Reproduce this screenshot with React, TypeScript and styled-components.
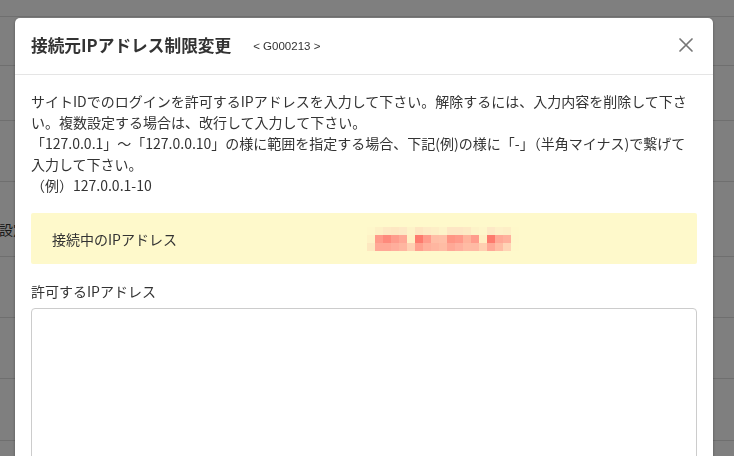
import React from 'react'
import styled, { createGlobalStyle } from 'styled-components'

const GlobalStyle = createGlobalStyle`
  html, body {
    margin: 0;
    padding: 0;
    width: 734px;
    height: 456px;
    overflow: hidden;
    background: #fff;
    font-family: "Noto Sans CJK JP", "Noto Sans", sans-serif;
    color: #333;
  }
`

const rows = [
  { height: 49, label: '' },
  { height: 55, label: '' },
  { height: 61, label: '' },
  { height: 75, label: '設定' },
  { height: 61, label: '' },
  { height: 61, label: '' },
  { height: 62, label: '' },
]

// mosaic of the hidden ip address, one array per row
const mosaic = [
  ['#fef7ca', '#fdf0c6', '#fde9c4', '#fde7c2', '#fde9c6', '#fdf3c8', '#fde6c2', '#fdebc6', '#fdeec6', '#fdf3c9', '#fde6c4', '#fde6c4', '#fde9c4', '#fdf3c8', '#fef6ca', '#fde9c6', '#fdf0c8', '#fdeec6', '#fef8ca'],
  ['#fef2c6', '#ff9b8a', '#fe8a7c', '#fe9c8c', '#ffa896', '#fff0c4', '#fd7b6e', '#ff9c8c', '#ffbea6', '#ffc0a8', '#ff9584', '#ff9a8a', '#ffb39c', '#ff9c8c', '#ffefc3', '#fd7a6d', '#ffa896', '#ffb09c', '#fef7ca'],
  ['#fde8c0', '#ffa896', '#ffa896', '#ffae9c', '#ffb6a0', '#ffd0b2', '#ffa08e', '#ffb09c', '#ffb6a0', '#ffbca4', '#ffa896', '#ffb09e', '#ffbba4', '#ffbaa4', '#ffcfb0', '#ffa896', '#ffbca4', '#ffd4b6', '#fef8ca'],
]

const App: React.FC = () =>
  <>
    <GlobalStyle />
    <Page>
      <TopBar />
      {rows.map((r, i) =>
        <Row key={i} $h={r.height}>
          <RowLabel>{r.label}</RowLabel>
        </Row>
      )}
    </Page>
    <Overlay>
      <Modal>
        <Header>
          <Title>接続元IPアドレス制限変更</Title>
          <Code>&lt; G000213 &gt;</Code>
          <Close aria-label="閉じる">
            <svg width="16" height="16" viewBox="0 0 16 16">
              <path d="M2 2 L14 14 M14 2 L2 14" stroke="#767676" strokeWidth="1.7" strokeLinecap="round" />
            </svg>
          </Close>
        </Header>
        <Body>
          <Description>
            サイトIDでのログインを許可するIPアドレスを入力して下さい。解除するには、入力内容を削除して下さい。複数設定する場合は、改行して入力して下さい。<br />
            「127.0.0.1」～「127.0.0.10」の様に範囲を指定する場合、下記(例)の様に「-」（半角マイナス)で繋げて入力して下さい。<br />
            （例）127.0.0.1-10
          </Description>
          <Notice>
            <NoticeLabel>接続中のIPアドレス</NoticeLabel>
            <svg width="152" height="24" viewBox="0 0 152 24" shapeRendering="crispEdges">
              {mosaic.map((line, y) =>
                line.map((c, x) =>
                  <rect key={`${x}-${y}`} x={x * 8} y={y * 8} width="8" height="8" fill={c} />
                )
              )}
            </svg>
          </Notice>
          <FieldLabel>許可するIPアドレス</FieldLabel>
          <TextArea />
        </Body>
      </Modal>
    </Overlay>
  </>

const Page = styled.div`
  display: flex;
  flex-direction: column;
  width: 734px;
`

const TopBar = styled.div`
  height: 16px;
  border-bottom: 1px solid #dedede;
`

const Row = styled.div<{ $h: number }>`
  height: ${({ $h }) => $h}px;
  box-sizing: border-box;
  border-bottom: 1px solid #dedede;
  display: flex;
  align-items: center;
  padding-top: 20px;
`

const RowLabel = styled.span`
  font-size: 14px;
  margin-left: -1px;
  color: #333;
`

const Overlay = styled.div`
  position: fixed;
  inset: 0;
  background: rgba(0, 0, 0, 0.5);
  display: flex;
  padding: 18px 21px 0 15px;
`

const Modal = styled.div`
  flex: 1;
  background: #fff;
  border-radius: 5px 5px 0 0;
  box-shadow: 0 1px 3px rgba(0, 0, 0, 0.35);
  display: flex;
  flex-direction: column;
  height: 520px;
`

const Header = styled.div`
  height: 57px;
  box-sizing: border-box;
  border-bottom: 1px solid #e5e5e5;
  display: flex;
  align-items: center;
  padding: 0 19px 2px 16px;
`

const Title = styled.h2`
  margin: 0;
  font-size: 16.7px;
  font-weight: 700;
  color: #333;
`

const Code = styled.span`
  margin-left: 22px;
  font-family: "Liberation Sans", Arial, sans-serif;
  font-size: 11.5px;
  color: #333;
  padding-top: 2px;
`

const Close = styled.button`
  margin-left: auto;
  background: none;
  border: none;
  padding: 0;
  width: 16px;
  height: 16px;
  display: flex;
  cursor: pointer;
`

const Body = styled.div`
  padding: 16px 16px 0;
  display: flex;
  flex-direction: column;
`

const Description = styled.p`
  margin: 0;
  font-size: 14px;
  line-height: 21px;
  color: #333;
`

const Notice = styled.div`
  margin-top: 17px;
  height: 51px;
  background: #fef9cb;
  border-radius: 2px;
  display: grid;
  grid-template-columns: 315px 1fr;
  align-items: center;
  padding: 0 21px;
`

const NoticeLabel = styled.span`
  font-size: 14px;
  color: #333;
`

const FieldLabel = styled.label`
  margin-top: 17px;
  font-size: 14px;
  line-height: 21px;
  color: #333;
`

const TextArea = styled.textarea`
  margin-top: 6px;
  height: 200px;
  border: 1px solid #cccccc;
  border-radius: 4px;
  resize: none;
  font: inherit;
`

export default App
